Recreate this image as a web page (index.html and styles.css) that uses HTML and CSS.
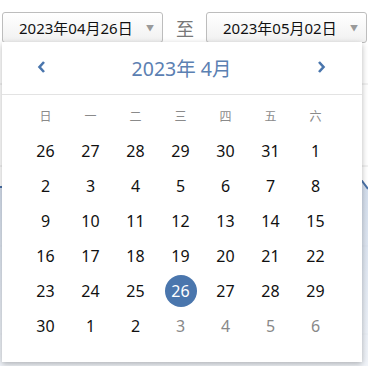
FILE: index.html
```html
<!DOCTYPE html>
<html lang="zh-CN">
<head>
  <meta charset="UTF-8" />
  <title>日期范围</title>
  <link rel="stylesheet" href="styles.css">
</head>
<body>

<div class="toolbar">
  <div class="date-input">
    <span class="date-text">2023年04月26日</span>
    <span class="caret">▼</span>
  </div>
  <span class="sep">至</span>
  <div class="date-input">
    <span class="date-text">2023年05月02日</span>
    <span class="caret">▼</span>
  </div>
</div>

<div class="chart">
  <svg width="368" height="320" viewBox="0 0 368 320">
    <defs>
      <linearGradient id="fill" x1="0" y1="0" x2="0" y2="1">
        <stop offset="0" stop-color="#c9d6e8"/>
        <stop offset="1" stop-color="#eef2f8"/>
      </linearGradient>
    </defs>
    <line x1="0" y1="33" x2="368" y2="33" stroke="#e4e4e4"/>
    <line x1="0" y1="115" x2="368" y2="115" stroke="#e4e4e4"/>
    <line x1="0" y1="195" x2="368" y2="195" stroke="#e4e4e4"/>
    <line x1="0" y1="283" x2="368" y2="283" stroke="#e4e4e4"/>
    <path d="M0 136 L180 132 L362 130 L368 138 L368 320 L0 320 Z" fill="url(#fill)" opacity="0.8"/>
    <path d="M0 136 L180 132 L362 130 L368 138" fill="none" stroke="#4a72a8" stroke-width="2"/>
  </svg>
</div>

<div class="picker">
  <div class="picker-head">
    <svg class="nav" width="12" height="14" viewBox="0 0 12 14"><path d="M8 2 L3.5 7 L8 12" fill="none" stroke="#4a76ad" stroke-width="2.6"/></svg>
    <span class="title">2023年 4月</span>
    <svg class="nav" width="12" height="14" viewBox="0 0 12 14"><path d="M4 2 L8.5 7 L4 12" fill="none" stroke="#4a76ad" stroke-width="2.6"/></svg>
  </div>
  <div class="days">
    <span class="wd">日</span><span class="wd">一</span><span class="wd">二</span><span class="wd">三</span><span class="wd">四</span><span class="wd">五</span><span class="wd">六</span>
    <span>26</span><span>27</span><span>28</span><span>29</span><span>30</span><span>31</span><span>1</span>
    <span>2</span><span>3</span><span>4</span><span>5</span><span>6</span><span>7</span><span>8</span>
    <span>9</span><span>10</span><span>11</span><span>12</span><span>13</span><span>14</span><span>15</span>
    <span>16</span><span>17</span><span>18</span><span>19</span><span>20</span><span>21</span><span>22</span>
    <span>23</span><span>24</span><span>25</span><span class="sel"><b>26</b></span><span>27</span><span>28</span><span>29</span>
    <span>30</span><span>1</span><span>2</span><span class="next">3</span><span class="next">4</span><span class="next">5</span><span class="next">6</span>
  </div>
</div>

</body>
</html>
```

FILE: styles.css
```css
* { box-sizing: border-box; }
body {
  margin: 0;
  font-family: "Noto Sans", "Noto Sans CJK SC", sans-serif;
  background: #fff;
  width: 368px;
  height: 366px;
  overflow: hidden;
  position: relative;
}
.toolbar {
  display: flex;
  align-items: center;
  padding: 12px 0 0 2px;
}
.date-input {
  width: 161px;
  height: 31px;
  border: 1px solid #bdbdbd;
  border-radius: 3px;
  background: linear-gradient(#fff, #f1f1f1);
  display: flex;
  align-items: center;
  padding: 0 8px 0 16px;
}
.date-text {
  flex: 1;
  font-size: 15px;
  color: #111;
}
.caret {
  font-size: 8px;
  color: #9a9a9a;
}
.sep {
  margin: 0 12px 0 13px;
  font-size: 18px;
  color: #777;
}
.chart {
  margin-top: 8px;
}
.chart svg { display: block; }
.picker {
  position: absolute;
  left: 2px;
  top: 42px;
  width: 360px;
  height: 320px;
  background: #fff;
  box-shadow: 0 2px 6px rgba(0, 0, 0, 0.28);
}
.picker-head {
  height: 53px;
  border-bottom: 1px solid #e3e3e3;
  display: flex;
  align-items: center;
  justify-content: space-between;
  padding: 0 35px 2px 34px;
}
.title {
  font-size: 19.5px;
  color: #5b80b2;
}
.nav { display: block; }
.days {
  display: grid;
  grid-template-columns: repeat(7, 45px);
  grid-auto-rows: 35px;
  padding: 3px 0 0 21px;
}
.days span {
  display: flex;
  align-items: center;
  justify-content: center;
  font-size: 16px;
  color: #111;
}
.days .wd {
  font-size: 12px;
  color: #8a8a8a;
}
.days .next { color: #888; }
.days .sel b {
  width: 32px;
  height: 32px;
  border-radius: 50%;
  background: #4a76ad;
  color: #fff;
  font-weight: normal;
  display: flex;
  align-items: center;
  justify-content: center;
}
```
